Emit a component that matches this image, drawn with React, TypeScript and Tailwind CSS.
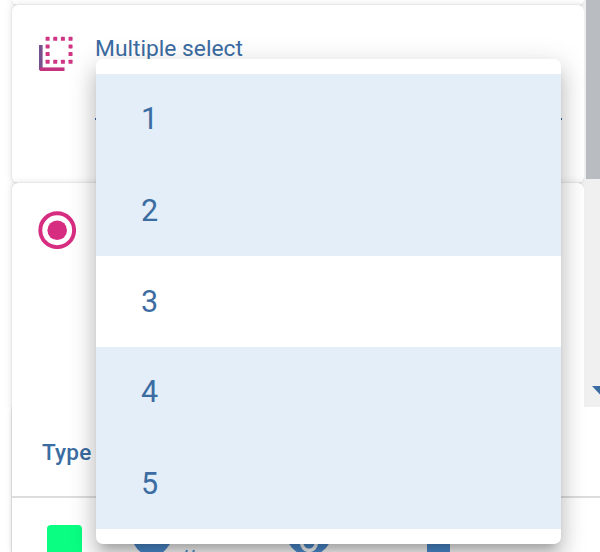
const options = [
  { value: "1", selected: true, inset: "pt-0" },
  { value: "2", selected: true, inset: "pt-px" },
  { value: "3", selected: false, inset: "pt-px" },
  { value: "4", selected: true, inset: "pt-0" },
  { value: "5", selected: true, inset: "pt-px" },
];

const cardShadow =
  "shadow-[0_3px_2px_-3px_rgba(0,0,0,0.12),0_0_2px_0_rgba(0,0,0,0.14),0_0_7px_1px_rgba(0,0,0,0.1)]";

function MultiSelectIcon() {
  const dots = [
    [0, 0], [1, 0], [2, 0], [3, 0],
    [0, 1], [3, 1],
    [0, 2], [3, 2],
    [0, 3], [1, 3], [2, 3], [3, 3],
  ];
  return (
    <svg width="36" height="36" viewBox="0 0 36 36" className="shrink-0">
      <path d="M2.8 9V34" stroke="#77508e" strokeWidth="3.6" />
      <path d="M1.8 33.2H26.5" stroke="#c43380" strokeWidth="3.6" />
      {dots.map(([x, y]) => (
        <rect key={`${x}-${y}`} x={7.6 + x * 7.65} y={0.8 + y * 7.65} width="4" height="4" rx="0.6" fill="#cf3583" />
      ))}
    </svg>
  );
}

function RadioIcon() {
  return (
    <svg width="38" height="38" viewBox="0 0 38 38" className="shrink-0">
      <circle cx="19.2" cy="19.2" r="16.9" fill="none" stroke="#d72d81" strokeWidth="3.9" />
      <circle cx="19.2" cy="19.2" r="9.8" fill="#d72d81" />
    </svg>
  );
}

function Scrollbar() {
  return (
    <div className="relative h-[407px] w-4 shrink-0 overflow-hidden bg-[#f0f0f0] pl-0.5">
      <div className="h-[179px] bg-[#b9bcc0]" />
      <svg className="absolute left-2 top-[386px]" width="8" height="9">
        <path d="M0 0H8V8.5Z" fill="#3b6ca2" />
      </svg>
    </div>
  );
}

function OptionMenu() {
  return (
    <ul className="absolute left-24 top-[59px] z-10 w-[465px] rounded-[7px] bg-white py-[15px] shadow-[0_9px_10px_-6px_rgba(0,0,0,0.2),0_15px_19px_2px_rgba(0,0,0,0.14),0_6px_27px_4px_rgba(0,0,0,0.12)]">
      {options.map((option) => (
        <li
          key={option.value}
          className={`flex h-[91px] items-center pl-[45px] text-[30.5px] leading-none tracking-[0.3px] ${option.inset} ${
            option.selected ? "bg-[#e4eef8]" : "bg-white"
          }`}
        >
          {option.value}
        </li>
      ))}
    </ul>
  );
}

export default function App() {
  return (
    <div className="relative h-[552px] w-[600px] overflow-hidden bg-white font-['Roboto',sans-serif] text-[#3b6ca2]">
      <div className="flex h-[407px] overflow-hidden">
        <div className="w-[584px] overflow-hidden pl-3">
          <div className={`h-[5px] rounded-b-[6px] bg-white ${cardShadow}`} />
          <section className={`flex h-[178px] rounded-[6px] bg-white pl-[26px] pt-[31px] ${cardShadow}`}>
            <MultiSelectIcon />
            <div className="flex grow flex-col pl-[21px] pr-[22px]">
              <h2 className="pt-px text-[22.8px] leading-6">Multiple select</h2>
              <div className="mt-[57px] h-[1.5px] w-[467px] bg-[#3b6ca2]" />
            </div>
          </section>
          <section className={`h-[240px] rounded-[6px] bg-white pl-[26px] pt-7 ${cardShadow}`}>
            <RadioIcon />
          </section>
        </div>
        <Scrollbar />
      </div>

      <div className="pl-3">
        <section className="h-[145px] bg-white shadow-[-1px_0_1px_rgba(0,0,0,0.1),-1px_1px_6px_rgba(0,0,0,0.1)]">
          <header className="flex h-[90.5px] items-center border-b-2 border-[#dddddd] pl-[30px] pt-[3px] text-[22.5px] font-medium tracking-[0.2px]">
            Type
          </header>
          <div className="flex pt-[27px] pl-[35px]">
            <div className="h-8 w-[35px] rounded-t-[4px] bg-[#0aff82]" />
            <svg width="396" height="28" viewBox="0 0 396 28" className="ml-[14px]">
              <path d="M38 19H74Q70 25 66 28H46Q41 25 38 19Z" fill="#4e8fd4" />
              <path d="M91 25L90 28M98 25L97 28" stroke="#4e8fd4" strokeWidth="2" />
              <path d="M192.5 18H233.5Q231 23 224 28H202Q195 23 192.5 18Z" fill="#4e8fd4" />
              <circle cx="213" cy="18" r="7.3" fill="none" stroke="#ffffff" strokeWidth="3.6" />
              <rect x="331" y="18" width="23" height="10" fill="#4e8fd4" />
            </svg>
          </div>
        </section>
      </div>

      <OptionMenu />
    </div>
  );
}
